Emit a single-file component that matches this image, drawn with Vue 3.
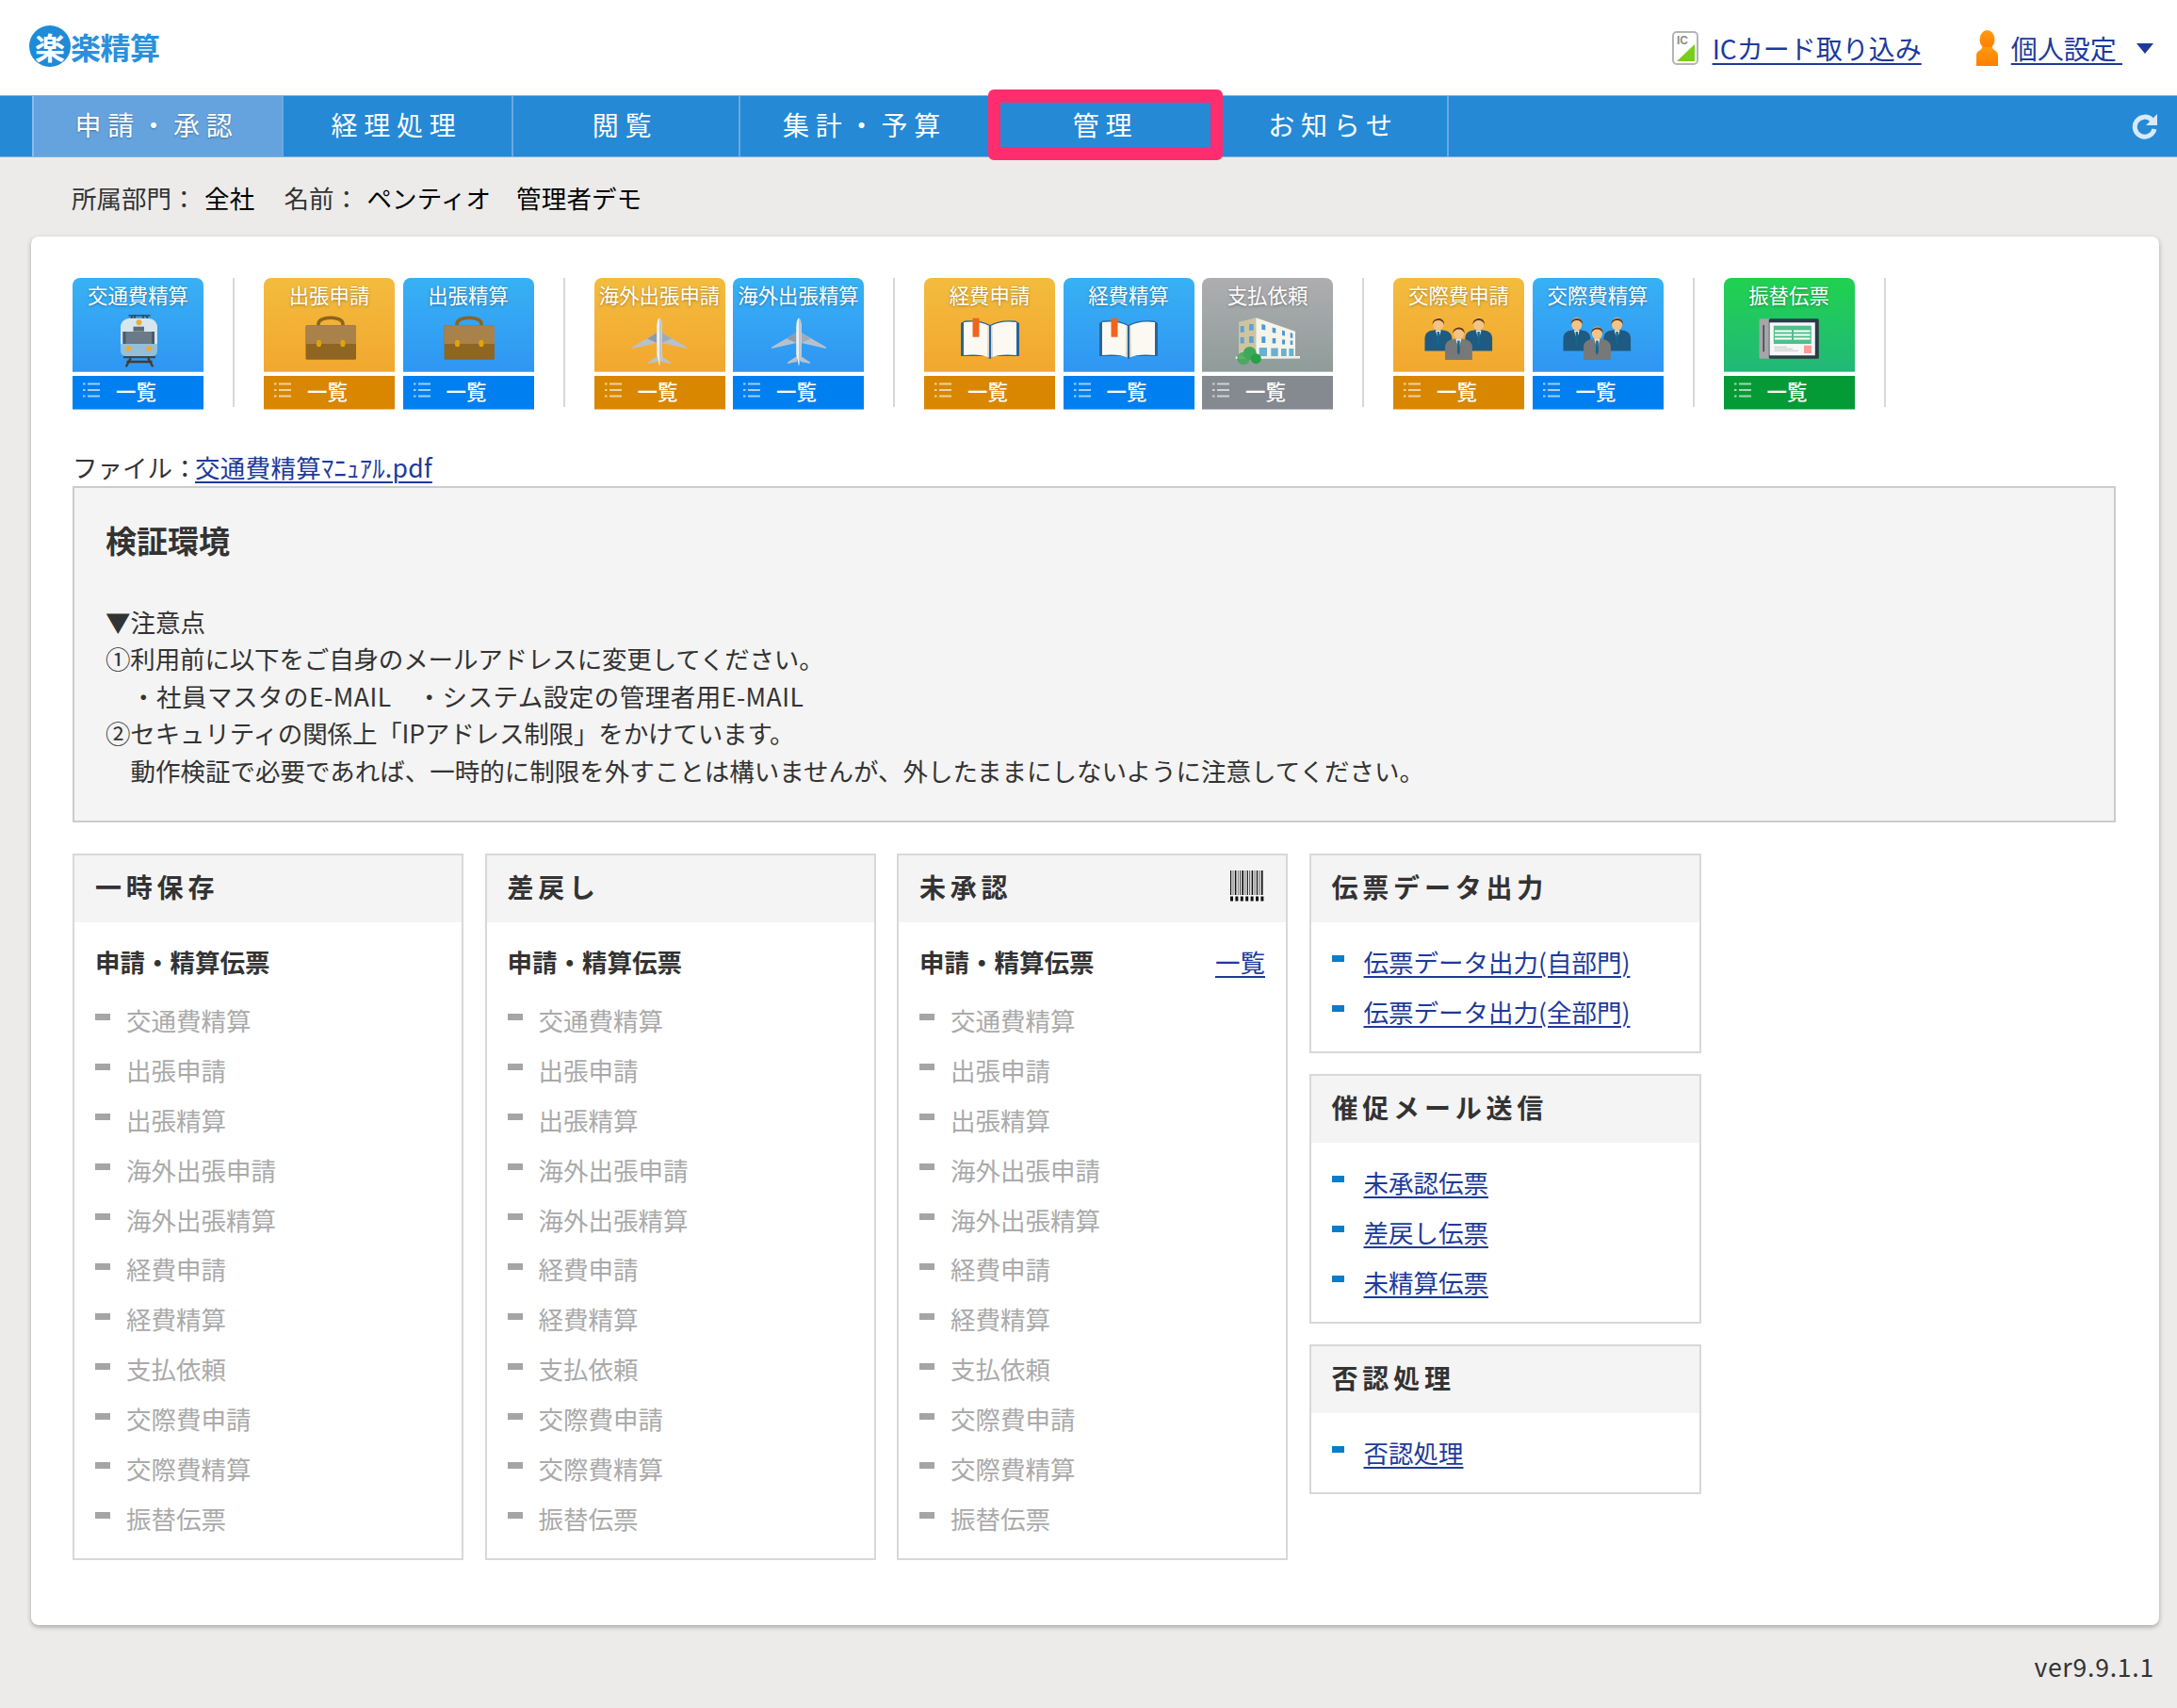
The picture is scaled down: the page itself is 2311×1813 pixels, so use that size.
<script setup>
const tabs = [
  { label: '申請・承認', width: 267, active: true },
  { label: '経理処理', width: 244 },
  { label: '閲覧', width: 241 },
  { label: '集計・予算', width: 268 },
  { label: '管理', width: 243, marked: true },
  { label: 'お知らせ', width: 241 },
]
const groups = [
  [{ t: '交通費精算', c: 'blue', i: 'train' }],
  [{ t: '出張申請', c: 'orange', i: 'case' }, { t: '出張精算', c: 'blue', i: 'case' }],
  [{ t: '海外出張申請', c: 'orange', i: 'plane' }, { t: '海外出張精算', c: 'blue', i: 'plane' }],
  [{ t: '経費申請', c: 'orange', i: 'book' }, { t: '経費精算', c: 'blue', i: 'book' }, { t: '支払依頼', c: 'gray', i: 'building' }],
  [{ t: '交際費申請', c: 'orange', i: 'people' }, { t: '交際費精算', c: 'blue', i: 'people' }],
  [{ t: '振替伝票', c: 'green', i: 'voucher' }],
]
const notes = [
  { text: '▼注意点' },
  { text: '①利用前に以下をご自身のメールアドレスに変更してください。', cls: 'tight' },
  { text: '　・社員マスタのE-MAIL　・システム設定の管理者用E-MAIL', cls: 'wide' },
  { text: '②セキュリティの関係上「IPアドレス制限」をかけています。', cls: 'tight' },
  { text: '　動作検証で必要であれば、一時的に制限を外すことは構いませんが、外したままにしないように注意してください。' },
]
const slipTypes = ['交通費精算', '出張申請', '出張精算', '海外出張申請', '海外出張精算', '経費申請', '経費精算', '支払依頼', '交際費申請', '交際費精算', '振替伝票']
const statusPanels = [
  { title: '一時保存' },
  { title: '差戻し' },
  { title: '未承認', extras: true },
]
const linkPanels = [
  { title: '伝票データ出力', links: ['伝票データ出力(自部門)', '伝票データ出力(全部門)'] },
  { title: '催促メール送信', links: ['未承認伝票', '差戻し伝票', '未精算伝票'] },
  { title: '否認処理', links: ['否認処理'] },
]
const barWidths = [1.2, 0.6, 1.6, 0.6, 0.8, 1.8, 0.6, 1.2, 0.7, 1.6, 0.6, 1.3, 0.7, 1.8]
let bx = 0
const bars = barWidths.map((w) => {
  const b = { x: bx, w }
  bx += w + 1.5
  return b
})
const people = [
  { x: 15.8, y: 8.5, suit: '#1f5a80' },
  { x: 58.6, y: 8.5, suit: '#1f5a80' },
  { x: 37.4, y: 18, suit: '#787878' },
]
</script>

<template>
  <div class="page">
    <header class="top">
      <div class="logo">
        <span class="logo-mark">楽</span>
        <span class="logo-text">楽精算</span>
      </div>
      <div class="top-links">
        <svg class="ic-icon" viewBox="0 0 28 36">
          <rect x="1" y="1" width="26" height="34" rx="4" fill="#fff" stroke="#b4b4b4" stroke-width="2" />
          <path d="M24 14V32H5Z" fill="#78cc1c" />
          <text x="5" y="14" class="ic-text">IC</text>
        </svg>
        <a class="link top-link">ICカード取り込み</a>
        <svg class="person-icon" viewBox="0 0 25 38">
          <defs>
            <linearGradient id="pg" x1="0" y1="0" x2="0" y2="1">
              <stop offset="0" stop-color="#ff9a12" />
              <stop offset="1" stop-color="#ff7e00" />
            </linearGradient>
          </defs>
          <ellipse cx="12.5" cy="10" rx="8" ry="10" fill="url(#pg)" />
          <path d="M7 18C7 22 1 21 1 27V38H24V27C24 21 18 22 18 18Z" fill="url(#pg)" />
        </svg>
        <a class="link top-link setting">個人設定&nbsp;</a>
        <span class="caret"></span>
      </div>
    </header>

    <nav class="nav">
      <div
        v-for="tab in tabs"
        :key="tab.label"
        class="tab"
        :class="{ active: tab.active }"
        :style="{ width: tab.width + 'px' }"
      >
        <span class="tab-label">{{ tab.label }}</span>
        <span v-if="tab.marked" class="mark"></span>
      </div>
      <svg class="refresh" viewBox="0 0 28 28">
        <path d="M21.5 7.5A10.5 10.5 0 1 0 24 17" fill="none" stroke="#d9e9f7" stroke-width="5" />
        <path d="M27 1V13H15Z" fill="#d9e9f7" />
      </svg>
    </nav>

    <div class="who">
      <span class="who-label">所属部門：</span><span class="who-value">全社</span>
      <span class="who-label who-second">名前：</span><span class="who-value">ペンティオ　管理者デモ</span>
    </div>

    <main class="card">
      <div class="tiles">
        <div v-for="(group, gi) in groups" :key="gi" class="group">
          <div v-for="tile in group" :key="tile.t" class="tile" :class="tile.c">
            <div class="tile-top">
              <div class="tile-title">{{ tile.t }}</div>
              <svg class="tile-icon" viewBox="0 0 76 58">
                <g v-if="tile.i === 'train'">
                  <path d="M27.5 1H50.5M32 1L30 4M46 1L48 4M34 0V4M43 0V4" stroke="#3b4650" stroke-width="1.6" fill="none" />
                  <rect x="19" y="4" width="39" height="40" rx="9" fill="#d6e6ef" />
                  <path d="M19 31H58V38Q58 44 52 44H25Q19 44 19 38Z" fill="#93c0d8" />
                  <rect x="21.5" y="18" width="33.5" height="13" fill="#6b7a88" />
                  <rect x="21.5" y="18" width="3" height="13" fill="#4d5a66" />
                  <rect x="52" y="18" width="3" height="13" fill="#4d5a66" />
                  <rect x="32.5" y="12.7" width="11.5" height="5" fill="#5b6b78" />
                  <circle cx="38.5" cy="8.3" r="3" fill="#eda93c" />
                  <circle cx="27.5" cy="36" r="3" fill="#eda93c" />
                  <circle cx="49.2" cy="36" r="3" fill="#eda93c" />
                  <rect x="22" y="44" width="34" height="2.2" fill="#3c4752" />
                  <path d="M29.8 46L24.8 55.3M48.2 46L53.2 55.3M25.5 50H52.5" stroke="#4a3a2a" stroke-width="2.4" fill="none" />
                </g>
                <g v-else-if="tile.i === 'case'">
                  <path d="M26 13V10C26 1 52 1 52 10V13" fill="none" stroke="#8c6420" stroke-width="3.6" />
                  <rect x="12.5" y="11.3" width="53.5" height="36.4" rx="1.5" fill="#8e6622" />
                  <path d="M12.5 12.8Q12.5 11.3 14 11.3H64.5Q66 11.3 66 12.8V31H12.5Z" fill="#a9814a" />
                  <rect x="24" y="26.7" width="5" height="7.6" rx="2.5" fill="#e0a30c" />
                  <rect x="49.4" y="26.7" width="5" height="7.6" rx="2.5" fill="#e0a30c" />
                </g>
                <g v-else-if="tile.i === 'plane'">
                  <path d="M35.5 19L9 34.5V36L35.5 30Z" fill="#b7c1ce" />
                  <path d="M40.5 19L67 34.5V36L40.5 30Z" fill="#b7c1ce" />
                  <path d="M35.5 19L25 25.5L35.5 30Z" fill="#8e9aa8" />
                  <path d="M40.5 19L51 25.5L40.5 30Z" fill="#a0abb8" />
                  <path d="M36 44L26 50.5V52L36 50Z" fill="#b7c1ce" />
                  <path d="M40 44L50 50.5V52L40 50Z" fill="#b7c1ce" />
                  <path d="M38 3.5C36 5 35.2 9 35.2 14V42L38 54.5L40.8 42V14C40.8 9 40 5 38 3.5Z" fill="#eef1f4" />
                  <path d="M38 3.5C40 5 40.8 9 40.8 14V42L38 54.5Z" fill="#bcc6d0" />
                </g>
                <g v-else-if="tile.i === 'book'">
                  <path d="M35 44Q38 50 41 44H69V9L65 6.5Q48 5 38 11Q28 5 11 6.5L7 9V44Z" fill="#2a6496" />
                  <path d="M37 12Q27 6 10 8V43Q27 41 37 45.5Z" fill="#fbf9f2" />
                  <path d="M39 12Q49 6 66 8V43Q49 41 39 45.5Z" fill="#fbf9f2" />
                  <path d="M35.5 11.5L37 12V45.5L35 44.5Z" fill="#d9d5c8" />
                  <path d="M40.5 11.5L39 12V45.5L41 44.5Z" fill="#d9d5c8" />
                  <rect x="19.5" y="3.7" width="7" height="20" fill="#f0641e" />
                </g>
                <g v-else-if="tile.i === 'building'">
                  <path d="M7 7.7L25.3 3.3V45.3H7Z" fill="#cfc4a0" />
                  <path d="M25.3 3.3L67 17.7V44.3L25.3 45.3Z" fill="#f6f4e8" />
                  <path d="M8.7 12H12.7V18.7H8.7ZM18 10H22.7V16.7H18ZM8.7 24H12.7V30.5H8.7ZM18 23H22.7V30H18Z" fill="#5aa4d6" />
                  <path d="M31.3 10L35.3 11V16.5L31.3 15.8ZM42.7 13.5L46.3 14.5V19.8L42.7 19ZM53 16.5L56 17.5V22.5L53 22ZM61.7 19L64.3 20V25L61.7 24.5ZM31.3 23.3H35.3V30H31.3ZM42.7 25H46.3V30.5H42.7ZM53 26.5H56V31.5H53ZM61.7 27.5H64.3V32H61.7Z" fill="#4a9ad8" />
                  <path d="M28.7 35H37V44.5H28.7ZM41.3 35.5H48.7V44.5H41.3ZM52 36H57.7V44.3H52ZM60.3 36H65.3V44.2H60.3Z" fill="#6ab0d0" />
                  <path d="M3.7 44.6L72 44V46.5L3.7 47Z" fill="#f4f2e8" />
                  <circle cx="12" cy="46.5" r="6.8" fill="#3fa95a" opacity=".85" />
                  <circle cx="18.7" cy="41" r="7" fill="#3fa95a" />
                  <circle cx="25.3" cy="46.7" r="5.5" fill="#27a048" />
                </g>
                <g v-else-if="tile.i === 'people'">
                  <g v-for="p in people" :key="p.x" :transform="`translate(${p.x} ${p.y})`">
                    <path d="M-14.3 15.8Q-14 9 -5 8L0 7L5 8Q14 9 14.5 15.8V30H-14.3Z" :fill="p.suit" />
                    <path d="M-3 8L0 18L3 8Z" fill="#e3eef2" />
                    <path d="M-1.2 9.5H1.2L1.5 22L0 25L-1.5 22Z" fill="#11678f" />
                    <ellipse cx="0" cy="1.5" rx="5.6" ry="7" fill="#f4c387" />
                    <path d="M-6 2C-7 -6 7 -7 6.2 2C5 -1 3 -2.5 0 -2.5C-3 -2.5 -5 -1 -6 2Z" fill="#6b3a12" />
                  </g>
                </g>
                <g v-else-if="tile.i === 'voucher'">
                  <rect x="6.5" y="4.3" width="12" height="42.4" rx="1.5" fill="#a5a5aa" />
                  <rect x="16.8" y="4.3" width="53" height="42.4" rx="1.5" fill="#2e3a46" />
                  <rect x="17.5" y="8.3" width="48.3" height="35" fill="#f6f8f7" />
                  <rect x="10.5" y="11" width="1.5" height="28.3" fill="#3a4652" />
                  <rect x="21.8" y="11.7" width="40" height="19.3" fill="#4fbf8c" />
                  <path d="M23 17.5H41M43 17.5H60.5M23 21.5H41M43 21.5H60.5M23 25.5H41M43 25.5H60.5" stroke="#fff" stroke-width="2" />
                  <path d="M22.5 34.3H36M22.5 36.3H42M22.5 38.3H48" stroke="#c4cbcb" stroke-width="1" />
                  <rect x="54" y="32.7" width="8" height="8.3" fill="#ff9a9a" />
                </g>
              </svg>
            </div>
            <div class="tile-list">
              <svg class="list-icon" viewBox="0 0 18 16">
                <path d="M0 1.5H2.5M5 1.5H18M0 8H2.5M5 8H18M0 14.5H2.5M5 14.5H18" stroke="rgba(255,255,255,.62)" stroke-width="2.2" />
              </svg>
              <span>一覧</span>
            </div>
          </div>
        </div>
      </div>

      <div class="file">ファイル：<a class="link file-link">交通費精算ﾏﾆｭｱﾙ.pdf</a></div>

      <section class="notice">
        <h2 class="notice-title">検証環境</h2>
        <p v-for="line in notes" :key="line.text" class="notice-line" :class="line.cls">{{ line.text }}</p>
      </section>

      <div class="panels">
        <section v-for="panel in statusPanels" :key="panel.title" class="panel">
          <div class="panel-head">
            <span>{{ panel.title }}</span>
            <svg v-if="panel.extras" class="barcode" viewBox="0 0 37 33">
              <rect v-for="b in bars" :key="b.x" :x="b.x" y="0" :width="b.w" height="26" fill="#111" />
              <path d="M0 30H37" stroke="#111" stroke-width="5" stroke-dasharray="3 2.4" />
            </svg>
          </div>
          <div class="panel-body">
            <div class="sub-row">
              <strong class="sub">申請・精算伝票</strong>
              <a v-if="panel.extras" class="link">一覧</a>
            </div>
            <div v-for="name in slipTypes" :key="name" class="item">
              <i class="dash"></i>{{ name }}
            </div>
          </div>
        </section>

        <div class="link-col">
          <section v-for="panel in linkPanels" :key="panel.title" class="panel link-panel">
            <div class="panel-head">{{ panel.title }}</div>
            <div class="link-body">
              <div v-for="l in panel.links" :key="l" class="link-item">
                <i class="square"></i><a class="link">{{ l }}</a>
              </div>
            </div>
          </section>
        </div>
      </div>
    </main>

    <footer class="ver">ver9.9.1.1</footer>
  </div>
</template>

<style scoped>
.page {
  font-family: "Noto Sans CJK JP", "Noto Sans", sans-serif;
  font-size: 26.5px;
  color: #333;
  background: #ecebea;
  min-height: 1813px;
}
.link {
  color: #1d3a9a;
  text-decoration: underline;
  text-decoration-thickness: 2px;
  text-underline-offset: 4px;
}
.top {
  height: 101px;
  background: #fff;
  display: flex;
  align-items: center;
  justify-content: space-between;
  padding: 0 25px 0 31px;
  box-sizing: border-box;
}
.logo {
  display: flex;
  align-items: center;
  margin-top: -3px;
}
.logo-mark {
  width: 44px;
  height: 44px;
  border-radius: 50%;
  background: #1f8ad8;
  color: #fff;
  font-size: 32px;
  font-weight: 700;
  line-height: 44px;
  text-align: center;
}
.logo-text {
  font-size: 32px;
  line-height: 44px;
  font-weight: 700;
  color: #2a90dc;
  letter-spacing: -0.5px;
}
.top-links {
  display: flex;
  align-items: center;
  font-size: 28px;
}
.ic-icon {
  width: 28px;
  height: 36px;
  margin-right: 15px;
}
.ic-text {
  font-size: 12px;
  font-weight: 700;
  fill: #8a8a8a;
  font-family: "Liberation Sans", sans-serif;
}
.top-link {
  line-height: 40px;
}
.person-icon {
  width: 25px;
  height: 38px;
  margin-left: 57px;
  margin-right: 13px;
}
.caret {
  width: 0;
  height: 0;
  border-left: 9px solid transparent;
  border-right: 9px solid transparent;
  border-top: 11px solid #1d3a9a;
  margin-left: 15px;
  margin-top: 1px;
}
.nav {
  height: 66px;
  box-sizing: border-box;
  background: #2589d6;
  border-top: 1px solid #7ab4e6;
  border-bottom: 1px solid #7ab4e6;
  display: flex;
  padding-left: 34px;
  color: #fff;
  font-size: 28px;
  letter-spacing: 6.8px;
}
.tab {
  position: relative;
  box-sizing: border-box;
  border-right: 2px solid #6aa9e0;
  display: flex;
  align-items: center;
  justify-content: center;
  white-space: nowrap;
}
.tab-label {
  margin: 0 2px 5px 0;
}
.tab.active {
  background: #64a3de;
  border-left: 2px solid #8cbce8;
  text-shadow: 0 1px 2px rgba(0, 0, 0, 0.3);
}
.mark {
  position: absolute;
  left: -5px;
  right: -3px;
  top: -7px;
  bottom: -4px;
  border: 14px solid #ff2d6e;
  border-left-width: 13px;
  border-right-width: 13px;
  border-radius: 6px;
}
.refresh {
  width: 28px;
  height: 28px;
  margin: 18px 20px 0 auto;
}
.who {
  line-height: 40px;
  padding: 23px 0 21px 76px;
  white-space: pre;
}
.who-value {
  color: #000;
  margin-left: 8.5px;
  letter-spacing: 0.2px;
}
.who-second {
  margin-left: 31px;
}
.card {
  margin: 0 19px 0 33px;
  padding: 44px 46px 68.5px 44px;
  background: #fff;
  border-radius: 8px;
  box-shadow: 0 2px 5px rgba(0, 0, 0, 0.3);
}
.tiles {
  display: flex;
  margin-bottom: 43px;
}
.group {
  display: flex;
  gap: 8.5px;
  padding-right: 31px;
  margin-right: 31px;
  height: 137px;
  border-right: 2px solid #d8d8d8;
}
.tile {
  width: 139px;
  height: 140px;
  display: flex;
  flex-direction: column;
  gap: 4px;
}
.tile-top {
  height: 100px;
  border-radius: 8px 8px 0 0;
}
.tile-title {
  color: #fff;
  font-size: 21.4px;
  line-height: 35px;
  text-align: center;
  text-shadow: 0 1px 3px rgba(0, 0, 0, 0.35);
  white-space: nowrap;
}
.tile-icon {
  display: block;
  width: 76px;
  height: 58px;
  margin: 4px auto 0;
}
.tile-list {
  height: 36px;
  display: flex;
  align-items: center;
  color: #fff;
  font-size: 21.4px;
  font-weight: 500;
  padding: 0 0 5px 11px;
}
.list-icon {
  width: 18px;
  height: 16px;
  margin-right: 17px;
}
.blue .tile-top { background: linear-gradient(#38b1f4, #2f96f3); border-bottom: 1px solid #62b2f7; box-sizing: border-box; }
.blue .tile-list { background: #0080f0; border-bottom: 1px solid #70b6f7; box-sizing: border-box; }
.orange .tile-top { background: linear-gradient(#f3bc3e, #f2a72f); border-bottom: 1px solid #f6c26e; box-sizing: border-box; }
.orange .tile-list { background: #d98700; border-bottom: 1px solid #eec07a; box-sizing: border-box; }
.gray .tile-top { background: linear-gradient(#aeadb0, #8f9c9a); border-bottom: 1px solid #b6bcbb; box-sizing: border-box; }
.gray .tile-list { background: #858990; border-bottom: 1px solid #bcbfc4; box-sizing: border-box; }
.green .tile-top { background: linear-gradient(#20d24f, #22b878); border-bottom: 1px solid #6fd0a4; box-sizing: border-box; }
.green .tile-list { background: #049b36; border-bottom: 1px solid #7ccb96; box-sizing: border-box; }
.file {
  line-height: 41px;
}
.file-link {
  letter-spacing: 0.3px;
  margin-left: -2.5px;
}
.notice {
  border: 2px solid #ccc;
  background: #f4f4f4;
  padding: 35px 33px 33.5px;
}
.notice-title {
  margin: 0 0 46.5px;
  font-size: 33px;
  line-height: 40px;
  font-weight: 700;
}
.notice-line {
  margin: 0;
  line-height: 39.5px;
}
.notice-line.tight {
  letter-spacing: -0.15px;
}
.notice-line.wide {
  letter-spacing: 0.5px;
}
.panels {
  display: flex;
  align-items: flex-start;
  gap: 22.5px;
  margin-top: 33px;
}
.panel {
  width: 415px;
  box-sizing: border-box;
  border: 2px solid #d8d8d8;
}
.link-panel {
  width: 416.5px;
}
.panel-head {
  height: 71px;
  box-sizing: border-box;
  background: #f4f4f4;
  display: flex;
  align-items: center;
  justify-content: space-between;
  padding: 0 22px 5px;
  font-size: 28px;
  font-weight: 700;
  letter-spacing: 4.8px;
}
.barcode {
  width: 37px;
  height: 33px;
}
.panel-body {
  padding: 22px 22px 16.5px;
}
.sub-row {
  display: flex;
  justify-content: space-between;
  line-height: 40px;
  margin-bottom: 15.5px;
}
.sub {
  font-weight: 700;
}
.item {
  height: 52.9px;
  display: flex;
  align-items: center;
  color: #aaa;
}
.dash {
  width: 16px;
  height: 7px;
  background: #a5a5a5;
  margin-right: 17px;
  margin-bottom: 5px;
}
.link-col {
  display: flex;
  flex-direction: column;
  gap: 22px;
}
.link-body {
  padding: 15px 22px 16px;
}
.link-item {
  height: 53px;
  display: flex;
  align-items: center;
}
.square {
  width: 13px;
  height: 7px;
  background: #0a7cc9;
  margin-right: 21px;
  margin-bottom: 5px;
}
.ver {
  text-align: right;
  line-height: 40px;
  padding: 24px 24px 0 0;
  letter-spacing: 0.8px;
}
</style>

<style>
html,
body {
  margin: 0;
  background: #ecebea;
}
</style>
